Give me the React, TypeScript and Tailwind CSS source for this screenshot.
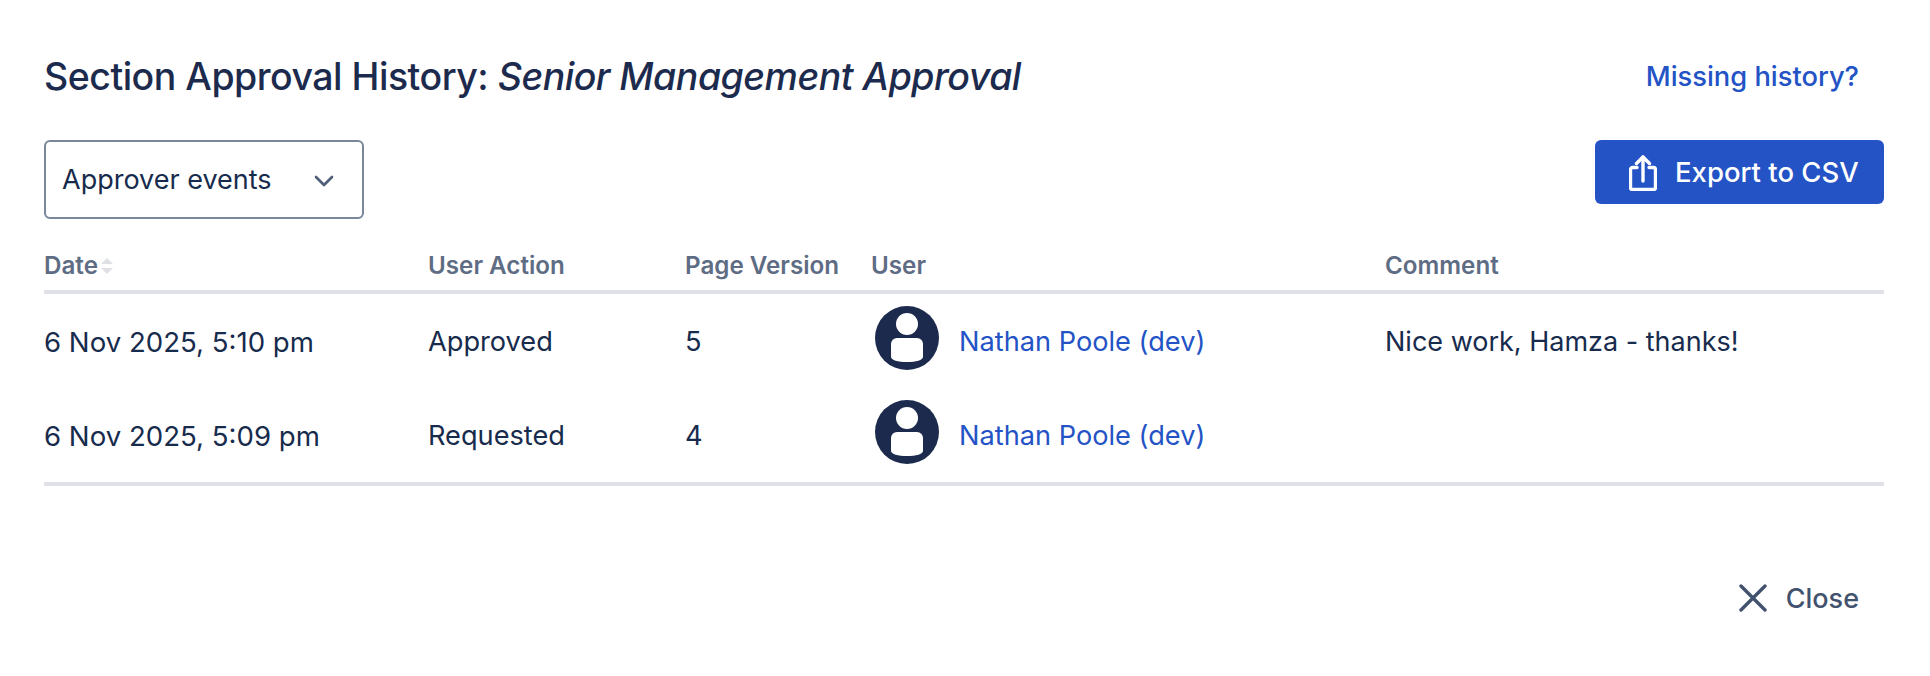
import { ChevronDown } from "lucide-react";

const rows = [
  { date: "6 Nov 2025, 5:10 pm", action: "Approved", version: "5", user: "Nathan Poole (dev)", comment: "Nice work, Hamza - thanks!" },
  { date: "6 Nov 2025, 5:09 pm", action: "Requested", version: "4", user: "Nathan Poole (dev)", comment: "" },
];

const Avatar = () => (
  <svg width="64" height="64" viewBox="0 0 64 64" className="shrink-0 mb-[6px]">
    <circle cx="32" cy="32" r="32" fill="#1c2b4d" />
    <circle cx="32" cy="18" r="11" fill="#fff" />
    <path d="M22 32h20a6 6 0 0 1 6 6v13c0 3-7 5-16 5s-16-2-16-5V38a6 6 0 0 1 6-6z" fill="#fff" />
  </svg>
);

const ShareIcon = () => (
  <svg width="28" height="36" viewBox="0 0 28 36" fill="none" stroke="#fff" strokeWidth="3.4" strokeLinecap="round" strokeLinejoin="round">
    <path d="M8 12.5H3.5a2 2 0 0 0-2 2v18a2 2 0 0 0 2 2h21a2 2 0 0 0 2-2v-18a2 2 0 0 0-2-2H20" />
    <path d="M14 26V2" />
    <path d="M7.5 8.5L14 2l6.5 6.5" />
  </svg>
);

const SortIcon = () => (
  <svg width="12" height="16" viewBox="0 0 12 16" className="ml-[3px]" fill="#dfe1e6">
    <path d="M6 0l6 6H0z" />
    <path d="M6 16l6-6H0z" />
  </svg>
);

export default function App() {
  return (
    <div className="w-[1930px] h-[676px] bg-white pl-[44px] pr-[46px] font-['Inter',sans-serif] text-[#172b4d] overflow-hidden">
      <div className="flex items-center justify-between pt-[50px] h-[140px] pb-[36px]">
        <h2 className="text-[37.5px] leading-[54px] font-medium text-[#1c2b4d] tracking-[-0.5px]">
          Section Approval History: <em className="italic">Senior Management Approval</em>
        </h2>
        <a className="pr-[25px] text-[27.3px] font-medium text-[#2353c5]">Missing history?</a>
      </div>

      <div className="flex items-start justify-between h-[108px]">
        <div className="flex items-center justify-between w-[320px] h-[79px] pl-[16px] pr-[22px] pt-[2px] border-2 border-[#7a869a] rounded-[6px] text-[27px]">
          <span>Approver events</span>
          <ChevronDown size={32} strokeWidth={2} color="#505f79" />
        </div>
        <button className="flex items-center gap-[18px] w-[289px] h-[64px] pl-[34px] pt-[1px] bg-[#2353c5] rounded-[6px] text-white text-[27.5px] font-medium">
          <ShareIcon />
          <span>Export to CSV</span>
        </button>
      </div>

      <table className="w-full table-fixed border-collapse">
        <colgroup>
          <col className="w-[384px]" />
          <col className="w-[257px]" />
          <col className="w-[186px]" />
          <col className="w-[514px]" />
          <col className="w-[499px]" />
        </colgroup>
        <thead>
          <tr className="border-b-4 border-[#dfe1e6] text-left text-[24.2px] font-semibold text-[#5e6c84]">
            <th className="pb-[6px] font-semibold">
              <span className="flex items-center">Date<SortIcon /></span>
            </th>
            <th className="pb-[6px] font-semibold">User Action</th>
            <th className="pb-[6px] font-semibold">Page Version</th>
            <th className="pb-[6px] font-semibold">User</th>
            <th className="pb-[6px] font-semibold">Comment</th>
          </tr>
        </thead>
        <tbody className="border-b-4 border-[#dfe1e6] text-[27.2px]">
          {rows.map((row, index) => (
            <tr key={index}>
              <td className="pt-[14px] pb-[12px] text-[27.6px]">{row.date}</td>
              <td className="pt-[14px] pb-[12px]">{row.action}</td>
              <td className="pt-[14px] pb-[12px]">{row.version}</td>
              <td className="py-[12px]">
                <div className="flex items-center gap-[20px] pl-[4px]">
                  <Avatar />
                  <a className="pt-[2px] text-[#2353c5]">{row.user}</a>
                </div>
              </td>
              <td className="pt-[14px] pb-[12px] text-[27px]">{row.comment}</td>
            </tr>
          ))}
        </tbody>
      </table>

      <div className="flex justify-end items-center gap-[19px] pt-[93px] pr-[25px] text-[27px] font-medium text-[#42526e]">
        <svg width="28" height="28" viewBox="0 0 28 28" className="mb-[4px]" fill="none" stroke="#42526e" strokeWidth="3.4" strokeLinecap="round">
          <path d="M2 2l24 24M26 2L2 26" />
        </svg>
        <span>Close</span>
      </div>
    </div>
  );
}
